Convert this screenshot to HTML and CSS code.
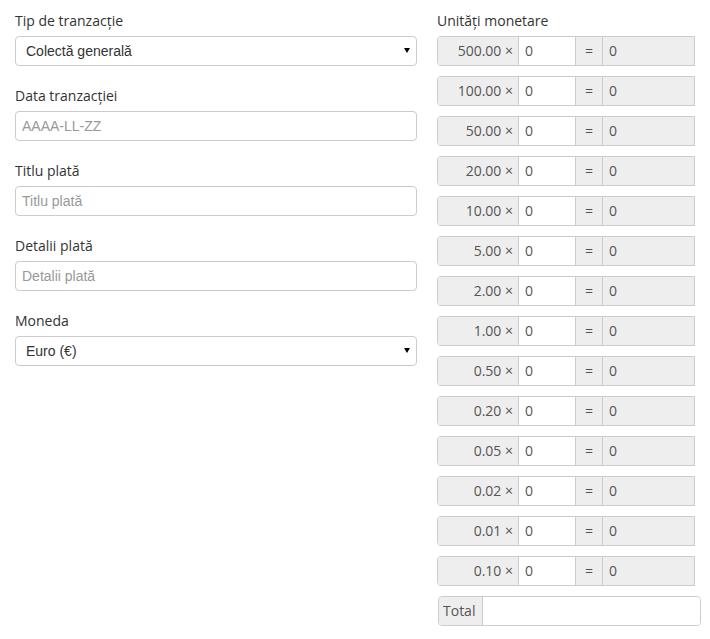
FILE: index.html
```html
<!DOCTYPE html>
<html lang="ro">

<head>
  <meta charset="UTF-8">
  <meta name="viewport" content="width=device-width, initial-scale=1" />
  <title>Tranzacţie</title>
  <link rel="stylesheet" href="styles.css">
</head>

<body>
  <div class="page">
    <div class="col-left">
      <div class="field">
        <label>Tip de tranzacţie</label>
        <div class="select">
          <select>
            <option>Colectă generală</option>
          </select>
        </div>
      </div>

      <div class="field">
        <label>Data tranzacţiei</label>
        <input type="text" placeholder="AAAA-LL-ZZ">
      </div>

      <div class="field">
        <label>Titlu plată</label>
        <input type="text" placeholder="Titlu plată">
      </div>

      <div class="field">
        <label>Detalii plată</label>
        <input type="text" placeholder="Detalii plată">
      </div>

      <div class="field">
        <label>Moneda</label>
        <div class="select">
          <select>
            <option>Euro (€)</option>
          </select>
        </div>
      </div>
    </div>

    <div class="col-right">
      <label>Unităţi monetare</label>

      <div class="units">
        <div class="unit"><span class="addon value">500.00 ×</span><input type="text" value="0"><span class="addon eq">=</span><span class="result">0</span></div>
        <div class="unit"><span class="addon value">100.00 ×</span><input type="text" value="0"><span class="addon eq">=</span><span class="result">0</span></div>
        <div class="unit"><span class="addon value">50.00 ×</span><input type="text" value="0"><span class="addon eq">=</span><span class="result">0</span></div>
        <div class="unit"><span class="addon value">20.00 ×</span><input type="text" value="0"><span class="addon eq">=</span><span class="result">0</span></div>
        <div class="unit"><span class="addon value">10.00 ×</span><input type="text" value="0"><span class="addon eq">=</span><span class="result">0</span></div>
        <div class="unit"><span class="addon value">5.00 ×</span><input type="text" value="0"><span class="addon eq">=</span><span class="result">0</span></div>
        <div class="unit"><span class="addon value">2.00 ×</span><input type="text" value="0"><span class="addon eq">=</span><span class="result">0</span></div>
        <div class="unit"><span class="addon value">1.00 ×</span><input type="text" value="0"><span class="addon eq">=</span><span class="result">0</span></div>
        <div class="unit"><span class="addon value">0.50 ×</span><input type="text" value="0"><span class="addon eq">=</span><span class="result">0</span></div>
        <div class="unit"><span class="addon value">0.20 ×</span><input type="text" value="0"><span class="addon eq">=</span><span class="result">0</span></div>
        <div class="unit"><span class="addon value">0.05 ×</span><input type="text" value="0"><span class="addon eq">=</span><span class="result">0</span></div>
        <div class="unit"><span class="addon value">0.02 ×</span><input type="text" value="0"><span class="addon eq">=</span><span class="result">0</span></div>
        <div class="unit"><span class="addon value">0.01 ×</span><input type="text" value="0"><span class="addon eq">=</span><span class="result">0</span></div>
        <div class="unit"><span class="addon value">0.10 ×</span><input type="text" value="0"><span class="addon eq">=</span><span class="result">0</span></div>
      </div>

      <div class="total">
        <span class="addon">Total</span><input type="text">
      </div>
    </div>
  </div>
</body>

</html>
```

FILE: styles.css
```css
:root {
  --color-text: #333;
  --color-input: #555;
  --color-placeholder: #999;
  --color-border: #ccc;
  --color-addon: #eee;
}

* {
  box-sizing: border-box;
  margin: 0;
  padding: 0;
}

body {
  background-color: #fff;
  color: var(--color-text);
  font-family: "Open Sans", sans-serif;
  font-size: 14px;
  line-height: 20px;
}

.page {
  padding: 11px 15px 0;

  display: flex;
  gap: 20px;
}

label {
  display: block;
  margin-bottom: 5px;
  color: var(--color-text);
}

.col-left {
  width: 402px;
  flex-shrink: 0;

  .field {
    margin-bottom: 20px;
  }

  input,
  select {
    display: block;
    width: 100%;
    height: 30px;
    padding: 0 10px;
    border: 1px solid var(--color-border);
    border-radius: 4px;
    background-color: #fff;
    color: var(--color-text);
    font-family: "Liberation Sans", Arial, sans-serif;
    font-size: 14px;
    outline: none;
  }

  input {
    padding-left: 6px;
  }

  input::placeholder {
    color: var(--color-placeholder);
  }

  .select {
    position: relative;

    select {
      appearance: none;
    }
  }

  .select::after {
    content: "";
    position: absolute;
    top: 12px;
    right: 7px;
    border-left: 3px solid transparent;
    border-right: 3px solid transparent;
    border-top: 5px solid #000;
    pointer-events: none;
  }
}

.col-right {
  .units {
    display: flex;
    flex-direction: column;
    gap: 10px;
  }

  .unit,
  .total {
    display: flex;
    height: 30px;
    border: 1px solid var(--color-border);
    overflow: hidden;
  }

  .unit {
    width: 258px;
    border-radius: 4px 0 0 4px;
  }

  .total {
    width: 263px;
    margin-top: 10px;
    margin-left: 1px;
    border-radius: 4px;
  }

  .addon,
  .result {
    display: flex;
    align-items: center;
    background-color: var(--color-addon);
    color: var(--color-input);
  }

  .value {
    width: 80px;
    flex-shrink: 0;
    justify-content: flex-end;
    padding-right: 5px;
  }

  .eq {
    width: 27px;
    flex-shrink: 0;
    justify-content: center;
    border-left: 1px solid var(--color-border);
  }

  .result {
    flex: 1;
    padding-left: 6px;
    border-left: 1px solid var(--color-border);
  }

  input {
    width: 57px;
    flex-shrink: 0;
    height: 100%;
    padding: 0 6px 1px;
    border: none;
    border-left: 1px solid var(--color-border);
    background-color: #fff;
    color: var(--color-input);
    font-family: "Open Sans", sans-serif;
    font-size: 14px;
    line-height: 20px;
    outline: none;
  }

  .total {
    .addon {
      width: 43px;
      flex-shrink: 0;
      padding-left: 4px;
    }

    input {
      flex: 1;
      width: auto;
    }
  }
}
```
